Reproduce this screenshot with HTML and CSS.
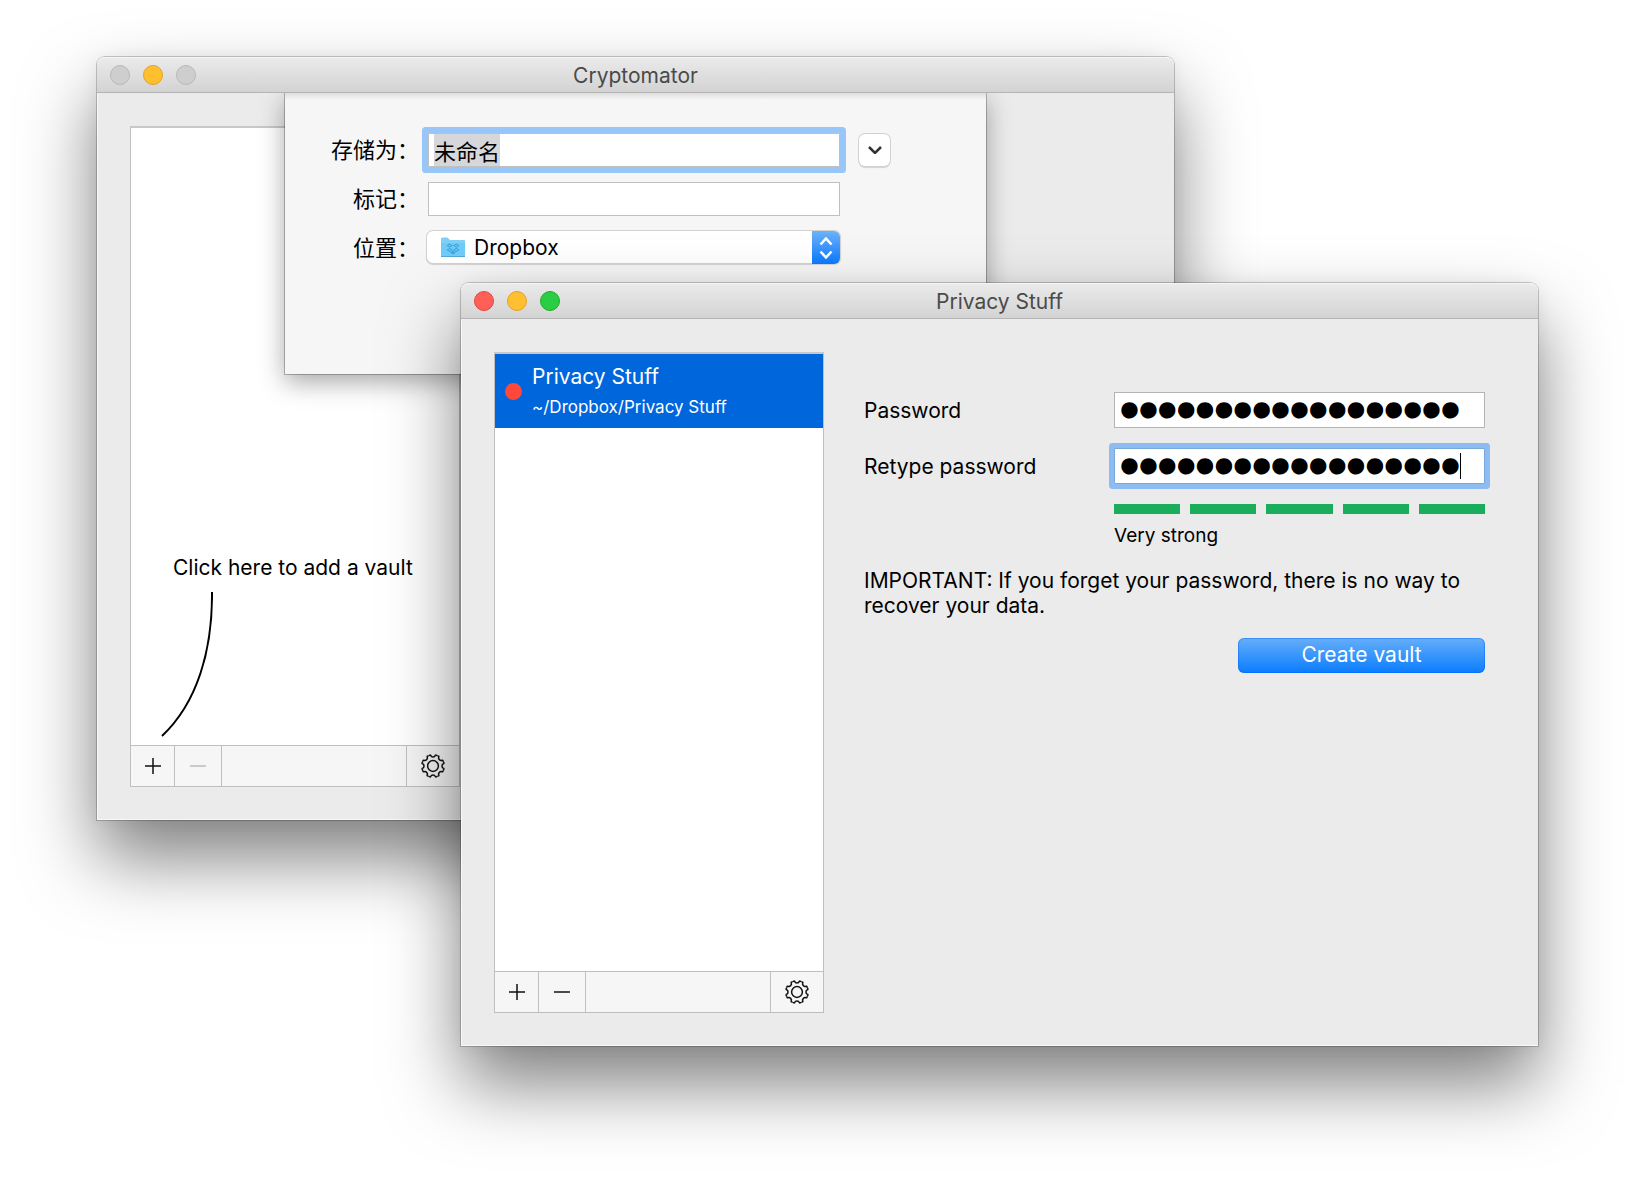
FILE: index.html
```html
<!DOCTYPE html>
<html lang="en">
<head>
<meta charset="utf-8">
<meta name="viewport" content="width=device-width, initial-scale=1">
<title>Cryptomator</title>
<link rel="stylesheet" href="styles.css">
</head>
<body>
<svg class="sprite" aria-hidden="true">
  <symbol id="plus" viewBox="0 0 16 16"><path d="M8 0v16M0 8h16"/></symbol>
  <symbol id="minus" viewBox="0 0 16 16"><path d="M0 8h16"/></symbol>
  <path id="tooth" d="M-4.3-10.4L-3.1-10.9Q-2.5-11.1-2.3-10.4Q-1.8-9 0-9Q1.8-9 2.3-10.4Q2.5-11.1 3.1-10.9L4.3-10.4"/>
  <symbol id="gear" viewBox="-12 -12 24 24">
    <circle r="5.4"/>
    <use href="#tooth"/>
    <use href="#tooth" transform="rotate(45)"/>
    <use href="#tooth" transform="rotate(90)"/>
    <use href="#tooth" transform="rotate(135)"/>
    <use href="#tooth" transform="rotate(180)"/>
    <use href="#tooth" transform="rotate(225)"/>
    <use href="#tooth" transform="rotate(270)"/>
    <use href="#tooth" transform="rotate(315)"/>
  </symbol>
</svg>
<main class="desktop">
  <section class="window window-back">
    <header class="titlebar">
      <div class="lights">
        <button class="light" aria-label="Close" disabled></button>
        <button class="light light-yellow" aria-label="Minimize"></button>
        <button class="light" aria-label="Zoom" disabled></button>
      </div>
      <h1 class="title">Cryptomator</h1>
    </header>
    <div class="body">
      <aside class="sidebar">
        <div class="vaults vaults-empty">
          <p class="hint">Click here to add a vault</p>
          <svg class="pointer" viewBox="0 0 52 146" aria-hidden="true"><path d="M51 1C51.500 60 36 112 1 145"/></svg>
        </div>
        <div class="toolbar">
          <button class="tool tool-add" aria-label="Add vault"><svg class="glyph"><use href="#plus"/></svg></button>
          <button class="tool tool-remove" aria-label="Remove vault" disabled><svg class="glyph"><use href="#minus"/></svg></button>
          <button class="tool tool-settings" aria-label="Settings"><svg class="gear"><use href="#gear"/></svg></button>
        </div>
      </aside>
    </div>
    <form class="sheet" lang="zh-CN">
      <label class="sheet-label" for="save-name">存储为：</label>
      <input class="sheet-field focused" id="save-name" type="text" value="未命名">
      <button class="expand" type="button" aria-label="展开"><svg viewBox="0 0 14 8"><path d="M1 1L7 7L13 1"/></svg></button>
      <label class="sheet-label" for="tags">标记：</label>
      <input class="sheet-field" id="tags" type="text">
      <label class="sheet-label" for="place">位置：</label>
      <div class="popup">
        <svg class="folder" viewBox="0 0 26 21" aria-hidden="true">
          <path fill="#7fd0f6" d="M1 2Q1 .5 2.500 .5H7.500L10 3H24Q25 3 25 4V19Q25 20 24 20H2Q1 20 1 19Z"/>
          <path fill="#6fccf9" d="M1 6H25V19H1Z"/>
          <path fill="#58a9d6" d="M1 19H25V20H1Z"/>
          <path fill="#3fa3dc" d="M9.500 6.500L13 8.500L9.700 10.700L6.500 8.600ZM16.500 6.500L13 8.500L16.300 10.700L19.500 8.600ZM6.500 12.800L9.700 10.700L13 13L9.500 15ZM19.500 12.800L16.300 10.700L13 13L16.500 15ZM13 13.700L16 15.600L13 17.500L10 15.600Z"/>
          <path fill="#74cdf8" d="M9.600 7.800L11.200 8.700L9.700 9.600L8.300 8.700ZM16.400 7.800L17.800 8.700L16.300 9.600L14.800 8.700ZM8.300 12.700L9.700 11.800L11.200 12.900L9.600 13.800ZM17.700 12.700L16.300 11.800L14.800 12.900L16.400 13.800Z"/>
        </svg>
        <select class="popup-select" id="place"><option>Dropbox</option></select>
        <span class="stepper"><svg viewBox="0 0 14 22"><path d="M1.500 7.500L7 1.500L12.500 7.500M1.500 14.500L7 20.500L12.500 14.500"/></svg></span>
      </div>
    </form>
  </section>

  <section class="window window-front">
    <header class="titlebar">
      <div class="lights">
        <button class="light light-red" aria-label="Close"></button>
        <button class="light light-yellow" aria-label="Minimize"></button>
        <button class="light light-green" aria-label="Zoom"></button>
      </div>
      <h1 class="title">Privacy Stuff</h1>
    </header>
    <div class="body">
      <aside class="sidebar">
        <ul class="vaults">
          <li class="vault">
            <span class="status"></span>
            <div>
              <div class="vault-name">Privacy Stuff</div>
              <div class="vault-path">~/Dropbox/Privacy Stuff</div>
            </div>
          </li>
        </ul>
        <div class="toolbar">
          <button class="tool tool-add" aria-label="Add vault"><svg class="glyph"><use href="#plus"/></svg></button>
          <button class="tool tool-remove" aria-label="Remove vault"><svg class="glyph"><use href="#minus"/></svg></button>
          <button class="tool tool-settings" aria-label="Settings"><svg class="gear"><use href="#gear"/></svg></button>
        </div>
      </aside>
      <form class="setup">
        <label for="password">Password</label>
        <input class="secret" id="password" type="password" value="correcthorsebatter">
        <label for="retype">Retype password</label>
        <div class="retype">
          <input class="secret focused" id="retype" type="password" value="correcthorsebatter">
          <span class="caret"></span>
        </div>
        <div class="strength">
          <div class="bars"><i></i><i></i><i></i><i></i><i></i></div>
          <div class="strength-text">Very strong</div>
        </div>
        <p class="notice">IMPORTANT: If you forget your password, there is no way to recover your data.</p>
        <button class="create" type="button">Create vault</button>
      </form>
    </div>
  </section>
</main>
<script src="main.js"></script>
</body>
</html>
```
FILE: styles.css
```css
* { box-sizing: border-box; }

body {
  margin: 0;
  background: #fff;
  color: #000;
  font: 22px/25px Inter, "Noto Sans CJK SC", sans-serif;
}

button, input, select {
  margin: 0;
  padding: 0;
  border: 0;
  border-radius: 0;
  background: none;
  color: inherit;
  font: inherit;
  outline: 0;
}

svg { display: block; fill: none; }
h1, p, ul { margin: 0; padding: 0; }
ul { list-style: none; }
.sprite { position: absolute; width: 0; height: 0; }

.desktop {
  position: relative;
  min-height: 100vh;
  overflow: hidden;
}

/* Windows */
.window {
  position: absolute;
  border-radius: 8px 8px 0 0;
  background: #ebebeb;
  box-shadow: 0 0 0 1px rgba(0, 0, 0, .2), 0 38px 72px rgba(0, 0, 0, .5), 0 0 16px rgba(0, 0, 0, .06);
}
.window-back { top: 57px; left: 97px; right: 462px; }
.window-front { top: 283px; left: 461px; right: 98px; }

.titlebar {
  display: grid;
  grid-template-columns: 1fr auto 1fr;
  align-items: center;
  height: 36px;
  padding: 0 13px;
  border-bottom: 1px solid #b4b4b4;
  border-radius: 8px 8px 0 0;
  background: linear-gradient(#ebebeb, #d3d3d3);
  box-shadow: inset 0 1px #f5f5f5;
}
.title { padding-top: 2px; font-size: 21px; font-weight: 400; color: #4a4a4a; }
.lights { display: flex; gap: 13px; }
.light {
  width: 20px;
  height: 20px;
  border: 1px solid #b8b8b8;
  border-radius: 50%;
  background: #cecece;
}
.light-red { border-color: #e2463f; background: #ff5f57; }
.light-yellow { border-color: #e1a325; background: #ffbf2f; }
.light-green { border-color: #1dad2b; background: #29ce42; }

.body {
  display: flex;
  gap: 40px;
  padding: 33px 53px 33px 33px;
  box-shadow: inset 1px -1px #f8f8f8;
}

/* Vault list */
.sidebar {
  flex: 0 0 330px;
  border: 1px solid #bfbfbf;
  border-top-width: 2px;
  border-top-color: #c8c8c8;
  background: #fff;
}
.vaults { min-height: 617px; }
.vault {
  display: flex;
  align-items: center;
  gap: 10px;
  height: 74px;
  padding: 0 10px;
  background: #0066dc;
  color: #fff;
}
.status {
  width: 17px;
  height: 17px;
  border-radius: 50%;
  background: #ff483a;
}
.vault-name { font-size: 21px; line-height: 32px; }
.vault-path { font-size: 17px; line-height: 28px; }

.vaults-empty { padding: 427px 31px 0 42px; }
.hint { font-size: 21px; white-space: nowrap; }
.pointer { width: 52px; height: 146px; margin: 11px 0 0 -12px; stroke: #000; stroke-width: 2; }

.toolbar {
  display: flex;
  height: 41px;
  border-top: 1px solid #bfbfbf;
  background: #f6f6f6;
}
.tool { display: grid; place-items: center; border: solid #bfbfbf; border-width: 0 1px 0 0; stroke: #111; }
.tool:disabled { stroke: #bbb; }
.tool-add { width: 44px; }
.tool-remove { width: 47px; }
.tool-settings { width: 53px; margin-left: auto; border-width: 0 0 0 1px; }
.glyph { width: 16px; height: 16px; stroke-width: 1.5; }
.gear { width: 24px; height: 24px; stroke-width: 1.5; }

/* Save sheet */
.sheet {
  position: absolute;
  top: 36px;
  left: 188px;
  right: 188px;
  display: grid;
  grid-template-columns: 134px 1fr 32px;
  grid-auto-rows: 34px;
  gap: 15px 0;
  align-items: center;
  min-height: 281px;
  padding: 40px 96px 0 0;
  align-content: start;
  background: linear-gradient(#dedede, #f6f6f6 7px);
  box-shadow: 0 0 0 1px rgba(0, 0, 0, .25), 0 8px 24px rgba(0, 0, 0, .35);
  clip-path: inset(0 -60px -60px -60px);
}
.sheet-label { grid-column: 1; text-align: right; }
.sheet-field {
  grid-column: 2;
  width: auto;
  height: 34px;
  margin: 0 18px 0 9px;
  padding: 0 5px;
  border: 1px solid #c0c0c0;
  background: #fff;
  line-height: 28px;
}
.sheet-field::selection { background: #d6d7da; color: #000; }
.sheet-field.focused { box-shadow: 0 0 0 6px #99c6f8; border-radius: 1px; }
.expand {
  display: grid;
  place-items: center;
  width: 31px;
  height: 32px;
  justify-self: end;
  border-radius: 6px;
  background: #fff;
  box-shadow: 0 0 0 1px #d2d2d2, 0 2px 1px rgba(0, 0, 0, .15);
}
.expand svg { width: 14px; height: 8px; stroke: #333; stroke-width: 2.5; }
.popup {
  grid-column: 2;
  position: relative;
  display: flex;
  align-items: center;
  height: 32px;
  margin: 0 18px 0 8px;
  border-radius: 6px;
  background: #fff;
  box-shadow: 0 0 0 1px #d2d2d2, 0 1px 1px 1px rgba(0, 0, 0, .15);
  align-self: start;
}
.folder { position: absolute; left: 13px; width: 26px; height: 21px; }
.popup-select {
  flex: 1;
  height: 32px;
  padding-left: 47px;
  appearance: none;
  font-size: 21px;
}
.stepper {
  position: absolute;
  top: 0;
  right: 0;
  display: grid;
  place-items: center;
  width: 28px;
  height: 33px;
  border-radius: 0 6px 6px 0;
  background: linear-gradient(#6db3fa, #0a7aff);
  pointer-events: none;
}
.stepper svg { width: 14px; height: 22px; stroke: #fff; stroke-width: 2.5; }

/* Password form */
.setup {
  flex: 1;
  display: grid;
  grid-template-columns: 250px 1fr;
  gap: 20px 0;
  align-content: start;
  align-items: center;
  padding-top: 40px;
  font-size: 21px;
}
.secret {
  width: 100%;
  height: 36px;
  padding: 2px 5px 0;
  border: 1px solid #b4b4b4;
  background: #fff;
  font: 32px/32px "DejaVu Sans", sans-serif;
  -webkit-text-stroke: 7px #000;
}
.secret.focused { border-color: #78a9dd; box-shadow: 0 0 0 5px #8ebcf2; border-radius: 1px; }
.retype { position: relative; display: flex; }
.caret { position: absolute; top: 5px; left: 346px; width: 1px; height: 26px; background: #000; }
.strength { grid-column: 2; }
.bars { display: grid; grid-template-columns: repeat(5, 1fr); gap: 10px; }
.bars i { height: 10px; background: #1aae5c; }
.strength-text { margin-top: 10px; font-size: 19px; line-height: 24px; }
.notice { grid-column: 1 / 3; }
.create {
  grid-column: 2;
  justify-self: end;
  width: 247px;
  height: 35px;
  padding-bottom: 2px;
  border-radius: 6px;
  background: linear-gradient(#66aefa, #0a7dff);
  box-shadow: inset 0 0 0 1px rgba(0, 100, 255, .4);
  color: #fff;
}
```
FILE: main.js
```js
// The suggested file name starts selected, ready to be typed over.
document.getElementById('save-name').select();
```
